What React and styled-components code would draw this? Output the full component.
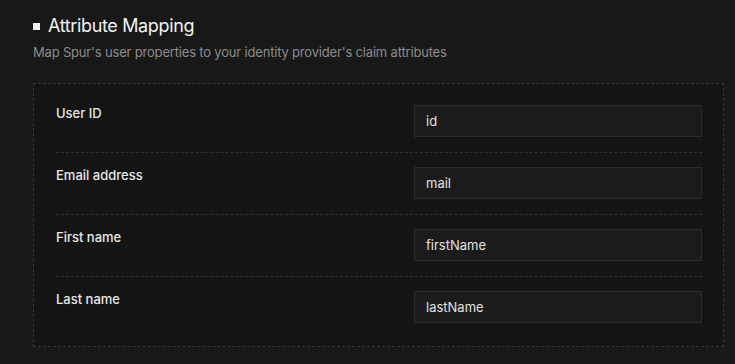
import styled, { createGlobalStyle } from 'styled-components';

const GlobalStyle = createGlobalStyle`
  html, body {
    margin: 0;
    padding: 0;
    background: #181818;
  }
  body {
    font-family: Inter, "Noto Sans", sans-serif;
    -webkit-font-smoothing: antialiased;
  }
`;

const Page = styled.div`
  padding: 14px 11px 0 33px;
`;

const Header = styled.div`
  display: flex;
  flex-direction: column;
  gap: 5px;
  margin-bottom: 22px;
`;

const Title = styled.h2`
  display: flex;
  align-items: center;
  gap: 8px;
  margin: 0;
  font-size: 18px;
  font-weight: 400;
  line-height: 24px;
  letter-spacing: -0.02em;
  color: #f2f2f2;
`;

const Bullet = styled.span`
  width: 7px;
  height: 7px;
  background: #f2f2f2;
  flex-shrink: 0;
`;

const Subtitle = styled.p`
  margin: 0;
  font-size: 13px;
  line-height: 18px;
  letter-spacing: -0.014em;
  color: #8c8c8c;
`;

const Card = styled.div`
  border: 1px dashed #363636;
  background: #141414;
  padding: 21px 21px 23px 22px;
`;

const Row = styled.div`
  display: grid;
  grid-template-columns: 1fr 288px;
  align-items: start;
  padding: 14px 0 15px;

  &:first-child {
    padding-top: 0;
  }
  &:last-child {
    padding-bottom: 0;
  }
  & + & {
    border-top: 1px dashed #303030;
  }
`;

const Label = styled.label`
  font-size: 13px;
  font-weight: 500;
  line-height: 16px;
  color: #e8e8e8;
`;

const Input = styled.input`
  box-sizing: border-box;
  width: 100%;
  height: 32px;
  padding: 0 11px;
  background: #1b1b1b;
  border: 1px solid #2c2c2c;
  border-radius: 0;
  color: #e0e0e0;
  font-family: inherit;
  font-size: 13px;
  outline: none;
`;

const fields = [
  { label: 'User ID', value: 'id' },
  { label: 'Email address', value: 'mail' },
  { label: 'First name', value: 'firstName' },
  { label: 'Last name', value: 'lastName' },
];

export default function App() {
  return (
    <>
      <GlobalStyle />
      <Page>
        <Header>
          <Title>
            <Bullet />
            Attribute Mapping
          </Title>
          <Subtitle>
            Map Spur's user properties to your identity provider's claim attributes
          </Subtitle>
        </Header>
        <Card>
          {fields.map((f) => (
            <Row key={f.label}>
              <Label>{f.label}</Label>
              <Input defaultValue={f.value} />
            </Row>
          ))}
        </Card>
      </Page>
    </>
  );
}
